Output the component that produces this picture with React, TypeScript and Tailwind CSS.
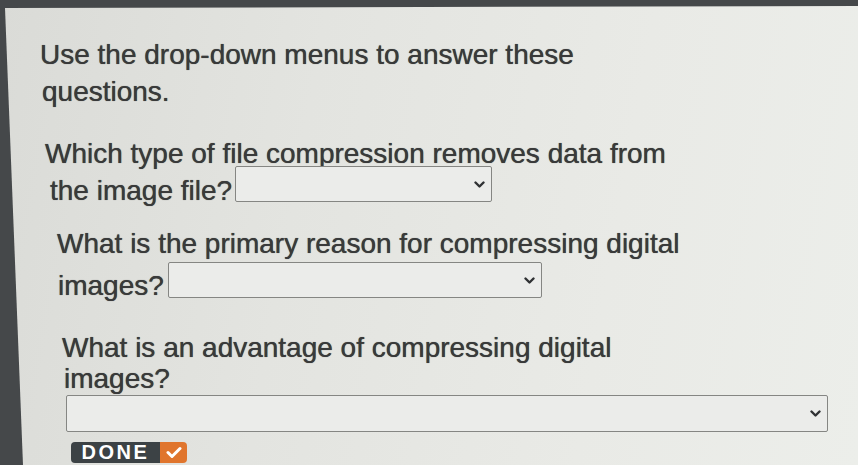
import React from "react";

function Chevron() {
  return (
    <svg width="11" height="7" viewBox="0 0 11 7" className="shrink-0">
      <polyline points="1.5,1.5 5.5,5.5 9.5,1.5" fill="none" stroke="#2f3133" strokeWidth="2.4" strokeLinecap="round" strokeLinejoin="round" />
    </svg>
  );
}

function Select({ className }: { className: string }) {
  return (
    <div
      className={
        "h-[36px] shrink-0 rounded-[2px] border-[1.5px] border-[#858683] bg-[#ebecea] flex items-center justify-end pr-[6px] " +
        className
      }
    >
      <Chevron />
    </div>
  );
}

export default function App() {
  return (
    <div className="w-[858px] h-[465px] overflow-hidden bg-[#45484a]">
      <div
        className="w-full h-full flex flex-col pt-[36px] text-[#393a3a] text-[28px] leading-[37px] [text-shadow:0_0_0.7px_#393a3a] bg-[linear-gradient(100deg,#dadbd7_0%,#e3e4e0_35%,#e9eae6_70%,#eceeea_100%)] [clip-path:polygon(5px_8px,100%_6px,100%_100%,23px_100%)]"
        style={{ fontFamily: '"Liberation Sans", Arial, sans-serif' }}
      >
        <div className="pl-[40px] h-[37px] whitespace-nowrap">Use the drop-down menus to answer these</div>
        <div className="pl-[42px] h-[37px] whitespace-nowrap">questions.</div>

        <div className="mt-[25px] pl-[45px] h-[37px] whitespace-nowrap">Which type of file compression removes data from</div>
        <div className="pl-[50px] h-[37px] flex items-start whitespace-nowrap">
          <span>the image file?</span>
          <Select className="ml-[3px] -mt-[6px] w-[257px]" />
        </div>

        <div className="mt-[16px] pl-[57px] h-[37px] whitespace-nowrap">What is the primary reason for compressing digital</div>
        <div className="mt-[5px] pl-[58px] h-[37px] flex items-start whitespace-nowrap">
          <span>images?</span>
          <Select className="ml-[4px] -mt-[5px] w-[374px]" />
        </div>

        <div className="mt-[25px] pl-[62px] h-[37px] whitespace-nowrap">What is an advantage of compressing digital</div>
        <div className="-mt-[6px] pl-[64px] h-[37px] whitespace-nowrap">images?</div>
        <div className="-mt-[2px] pl-[66px] flex">
          <Select className="w-[762px] h-[37px]" />
        </div>

        <div className="mt-[10px] pl-[71px] flex">
          <div className="h-[21px] flex [text-shadow:none]">
            <div className="w-[89px] rounded-l-[4px] bg-[#3c4245] flex items-center justify-center text-white font-bold text-[20px] leading-[21px] tracking-[2.5px]">
              DONE
            </div>
            <div className="w-[27px] rounded-r-[4px] bg-[#e0752d] flex items-center justify-center">
              <svg width="16" height="13" viewBox="0 0 16 13">
                <polyline points="2,6.5 6,10.5 14,2.5" fill="none" stroke="#ffffff" strokeWidth="3" strokeLinecap="round" strokeLinejoin="round" />
              </svg>
            </div>
          </div>
        </div>
      </div>
    </div>
  );
}
